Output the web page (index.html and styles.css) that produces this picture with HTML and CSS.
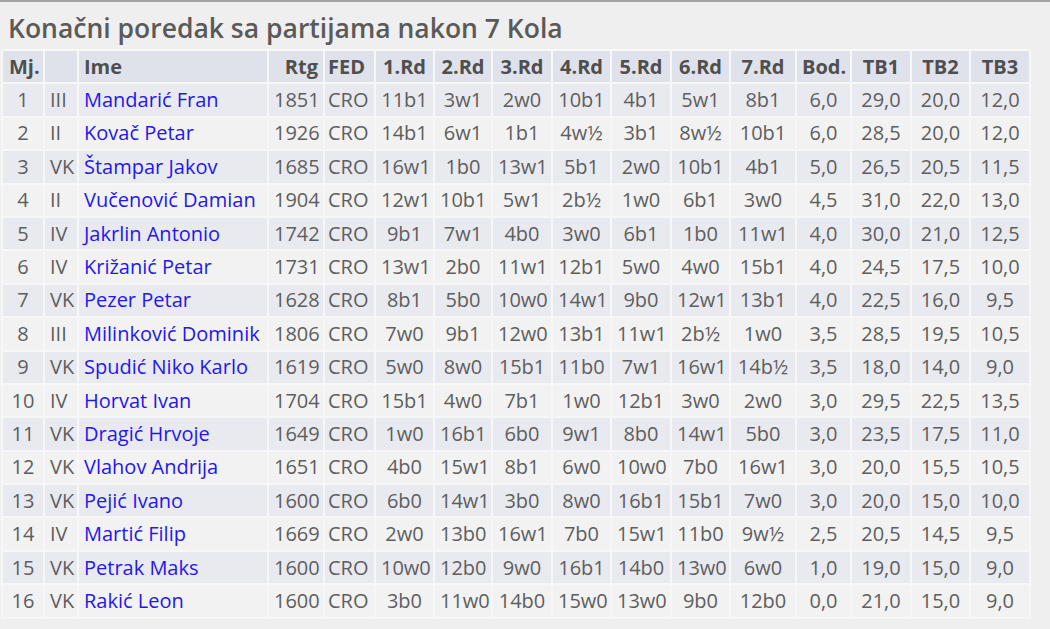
FILE: index.html
```html
<!DOCTYPE html>
<html lang="hr">
<head>
<meta charset="utf-8">
<title>Konačni poredak</title>
<link rel="stylesheet" href="styles.css">
</head>
<body>
<h1 class="title">Konačni poredak sa partijama nakon 7 Kola</h1>
<table class="standings">
<colgroup>
<col class="w-mj"><col class="w-cat"><col class="w-name"><col class="w-rtg"><col class="w-fed">
<col class="w-rd1"><col class="w-rd2"><col class="w-rd3"><col class="w-rd4"><col class="w-rd5"><col class="w-rd6"><col class="w-rd7">
<col class="w-pts"><col class="w-tb"><col class="w-tb2"><col class="w-tb">
</colgroup>
<thead>
<tr><th class="c-mj">Mj.</th><th class="c-cat"></th><th class="c-name">Ime</th><th class="c-rtg">Rtg</th><th class="c-fed">FED</th><th class="c-mid">1.Rd</th><th class="c-mid">2.Rd</th><th class="c-mid">3.Rd</th><th class="c-mid">4.Rd</th><th class="c-mid">5.Rd</th><th class="c-mid">6.Rd</th><th class="c-mid">7.Rd</th><th class="c-mid">Bod.</th><th class="c-mid">TB1</th><th class="c-mid">TB2</th><th class="c-mid">TB3</th></tr>
</thead>
<tbody>
<tr><td class="c-mj">1</td><td class="c-cat">III</td><td class="c-name">Mandarić Fran</td><td class="c-rtg">1851</td><td class="c-fed">CRO</td><td class="c-mid">11b1</td><td class="c-mid">3w1</td><td class="c-mid">2w0</td><td class="c-mid">10b1</td><td class="c-mid">4b1</td><td class="c-mid">5w1</td><td class="c-mid">8b1</td><td class="c-mid">6,0</td><td class="c-mid">29,0</td><td class="c-mid">20,0</td><td class="c-mid">12,0</td></tr>
<tr><td class="c-mj">2</td><td class="c-cat">II</td><td class="c-name">Kovač Petar</td><td class="c-rtg">1926</td><td class="c-fed">CRO</td><td class="c-mid">14b1</td><td class="c-mid">6w1</td><td class="c-mid">1b1</td><td class="c-mid">4w½</td><td class="c-mid">3b1</td><td class="c-mid">8w½</td><td class="c-mid">10b1</td><td class="c-mid">6,0</td><td class="c-mid">28,5</td><td class="c-mid">20,0</td><td class="c-mid">12,0</td></tr>
<tr><td class="c-mj">3</td><td class="c-cat">VK</td><td class="c-name">Štampar Jakov</td><td class="c-rtg">1685</td><td class="c-fed">CRO</td><td class="c-mid">16w1</td><td class="c-mid">1b0</td><td class="c-mid">13w1</td><td class="c-mid">5b1</td><td class="c-mid">2w0</td><td class="c-mid">10b1</td><td class="c-mid">4b1</td><td class="c-mid">5,0</td><td class="c-mid">26,5</td><td class="c-mid">20,5</td><td class="c-mid">11,5</td></tr>
<tr><td class="c-mj">4</td><td class="c-cat">II</td><td class="c-name">Vučenović Damian</td><td class="c-rtg">1904</td><td class="c-fed">CRO</td><td class="c-mid">12w1</td><td class="c-mid">10b1</td><td class="c-mid">5w1</td><td class="c-mid">2b½</td><td class="c-mid">1w0</td><td class="c-mid">6b1</td><td class="c-mid">3w0</td><td class="c-mid">4,5</td><td class="c-mid">31,0</td><td class="c-mid">22,0</td><td class="c-mid">13,0</td></tr>
<tr><td class="c-mj">5</td><td class="c-cat">IV</td><td class="c-name">Jakrlin Antonio</td><td class="c-rtg">1742</td><td class="c-fed">CRO</td><td class="c-mid">9b1</td><td class="c-mid">7w1</td><td class="c-mid">4b0</td><td class="c-mid">3w0</td><td class="c-mid">6b1</td><td class="c-mid">1b0</td><td class="c-mid">11w1</td><td class="c-mid">4,0</td><td class="c-mid">30,0</td><td class="c-mid">21,0</td><td class="c-mid">12,5</td></tr>
<tr><td class="c-mj">6</td><td class="c-cat">IV</td><td class="c-name">Križanić Petar</td><td class="c-rtg">1731</td><td class="c-fed">CRO</td><td class="c-mid">13w1</td><td class="c-mid">2b0</td><td class="c-mid">11w1</td><td class="c-mid">12b1</td><td class="c-mid">5w0</td><td class="c-mid">4w0</td><td class="c-mid">15b1</td><td class="c-mid">4,0</td><td class="c-mid">24,5</td><td class="c-mid">17,5</td><td class="c-mid">10,0</td></tr>
<tr><td class="c-mj">7</td><td class="c-cat">VK</td><td class="c-name">Pezer Petar</td><td class="c-rtg">1628</td><td class="c-fed">CRO</td><td class="c-mid">8b1</td><td class="c-mid">5b0</td><td class="c-mid">10w0</td><td class="c-mid">14w1</td><td class="c-mid">9b0</td><td class="c-mid">12w1</td><td class="c-mid">13b1</td><td class="c-mid">4,0</td><td class="c-mid">22,5</td><td class="c-mid">16,0</td><td class="c-mid">9,5</td></tr>
<tr><td class="c-mj">8</td><td class="c-cat">III</td><td class="c-name">Milinković Dominik</td><td class="c-rtg">1806</td><td class="c-fed">CRO</td><td class="c-mid">7w0</td><td class="c-mid">9b1</td><td class="c-mid">12w0</td><td class="c-mid">13b1</td><td class="c-mid">11w1</td><td class="c-mid">2b½</td><td class="c-mid">1w0</td><td class="c-mid">3,5</td><td class="c-mid">28,5</td><td class="c-mid">19,5</td><td class="c-mid">10,5</td></tr>
<tr><td class="c-mj">9</td><td class="c-cat">VK</td><td class="c-name">Spudić Niko Karlo</td><td class="c-rtg">1619</td><td class="c-fed">CRO</td><td class="c-mid">5w0</td><td class="c-mid">8w0</td><td class="c-mid">15b1</td><td class="c-mid">11b0</td><td class="c-mid">7w1</td><td class="c-mid">16w1</td><td class="c-mid">14b½</td><td class="c-mid">3,5</td><td class="c-mid">18,0</td><td class="c-mid">14,0</td><td class="c-mid">9,0</td></tr>
<tr><td class="c-mj">10</td><td class="c-cat">IV</td><td class="c-name">Horvat Ivan</td><td class="c-rtg">1704</td><td class="c-fed">CRO</td><td class="c-mid">15b1</td><td class="c-mid">4w0</td><td class="c-mid">7b1</td><td class="c-mid">1w0</td><td class="c-mid">12b1</td><td class="c-mid">3w0</td><td class="c-mid">2w0</td><td class="c-mid">3,0</td><td class="c-mid">29,5</td><td class="c-mid">22,5</td><td class="c-mid">13,5</td></tr>
<tr><td class="c-mj">11</td><td class="c-cat">VK</td><td class="c-name">Dragić Hrvoje</td><td class="c-rtg">1649</td><td class="c-fed">CRO</td><td class="c-mid">1w0</td><td class="c-mid">16b1</td><td class="c-mid">6b0</td><td class="c-mid">9w1</td><td class="c-mid">8b0</td><td class="c-mid">14w1</td><td class="c-mid">5b0</td><td class="c-mid">3,0</td><td class="c-mid">23,5</td><td class="c-mid">17,5</td><td class="c-mid">11,0</td></tr>
<tr><td class="c-mj">12</td><td class="c-cat">VK</td><td class="c-name">Vlahov Andrija</td><td class="c-rtg">1651</td><td class="c-fed">CRO</td><td class="c-mid">4b0</td><td class="c-mid">15w1</td><td class="c-mid">8b1</td><td class="c-mid">6w0</td><td class="c-mid">10w0</td><td class="c-mid">7b0</td><td class="c-mid">16w1</td><td class="c-mid">3,0</td><td class="c-mid">20,0</td><td class="c-mid">15,5</td><td class="c-mid">10,5</td></tr>
<tr><td class="c-mj">13</td><td class="c-cat">VK</td><td class="c-name">Pejić Ivano</td><td class="c-rtg">1600</td><td class="c-fed">CRO</td><td class="c-mid">6b0</td><td class="c-mid">14w1</td><td class="c-mid">3b0</td><td class="c-mid">8w0</td><td class="c-mid">16b1</td><td class="c-mid">15b1</td><td class="c-mid">7w0</td><td class="c-mid">3,0</td><td class="c-mid">20,0</td><td class="c-mid">15,0</td><td class="c-mid">10,0</td></tr>
<tr><td class="c-mj">14</td><td class="c-cat">IV</td><td class="c-name">Martić Filip</td><td class="c-rtg">1669</td><td class="c-fed">CRO</td><td class="c-mid">2w0</td><td class="c-mid">13b0</td><td class="c-mid">16w1</td><td class="c-mid">7b0</td><td class="c-mid">15w1</td><td class="c-mid">11b0</td><td class="c-mid">9w½</td><td class="c-mid">2,5</td><td class="c-mid">20,5</td><td class="c-mid">14,5</td><td class="c-mid">9,5</td></tr>
<tr><td class="c-mj">15</td><td class="c-cat">VK</td><td class="c-name">Petrak Maks</td><td class="c-rtg">1600</td><td class="c-fed">CRO</td><td class="c-mid">10w0</td><td class="c-mid">12b0</td><td class="c-mid">9w0</td><td class="c-mid">16b1</td><td class="c-mid">14b0</td><td class="c-mid">13w0</td><td class="c-mid">6w0</td><td class="c-mid">1,0</td><td class="c-mid">19,0</td><td class="c-mid">15,0</td><td class="c-mid">9,0</td></tr>
<tr><td class="c-mj">16</td><td class="c-cat">VK</td><td class="c-name">Rakić Leon</td><td class="c-rtg">1600</td><td class="c-fed">CRO</td><td class="c-mid">3b0</td><td class="c-mid">11w0</td><td class="c-mid">14b0</td><td class="c-mid">15w0</td><td class="c-mid">13w0</td><td class="c-mid">9b0</td><td class="c-mid">12b0</td><td class="c-mid">0,0</td><td class="c-mid">21,0</td><td class="c-mid">15,0</td><td class="c-mid">9,0</td></tr>
</tbody>
</table>
</body>
</html>
```

FILE: styles.css
```css
html, body {
  margin: 0;
  padding: 0;
}
body {
  background: #efefef;
  border-top: 2px solid #a3a3a3;
  font-family: "Open Sans", "Noto Sans", sans-serif;
  color: #5e5e5e;
}
.title {
  margin: 0 0 3px 0;
  padding: 8px 0 0 8px;
  font-size: 26.5px;
  font-weight: 600;
  line-height: 36px;
  color: #5a5a5a;
  white-space: nowrap;
}
.standings {
  width: 1030px;
  margin-left: 1px;
  table-layout: fixed;
  border-collapse: separate;
  border-spacing: 2px;
  background: #f7f7f7;
  font-size: 20px;
}
.w-mj { width: 40px; }
.w-cat { width: 32px; }
.w-name { width: 188px; }
.w-rtg { width: 54px; }
.w-fed { width: 49px; }
.w-rd1 { width: 57px; }
.w-rd2 { width: 56px; }
.w-rd3 { width: 58px; }
.w-rd4 { width: 57px; }
.w-rd5 { width: 58px; }
.w-rd6 { width: 57px; }
.w-rd7 { width: 64px; }
.w-pts { width: 53px; }
.w-tb { width: 58px; }
.w-tb2 { width: 57px; }
.standings th,
.standings td {
  box-sizing: border-box;
  height: 31.4px;
  padding: 0 5px;
  white-space: nowrap;
  overflow: visible;
  line-height: 24px;
  vertical-align: middle;
}
.standings th {
  background: #dfe2ea;
  color: #4f4f4f;
  font-weight: bold;
}
.standings tbody tr:nth-child(odd) td {
  background: #e9eaef;
}
.standings tbody tr:nth-child(even) td {
  background: #f2f2f2;
}
.c-mj { text-align: center; }
.standings th.c-mj { text-align: left; padding-left: 6px; }
.c-cat { text-align: left; }
.c-name { text-align: left; }
td.c-name { color: #2417ee; }
.c-rtg { text-align: right; }
.c-fed { text-align: left; padding-left: 3px !important; }
.c-mid { text-align: center; }
```
